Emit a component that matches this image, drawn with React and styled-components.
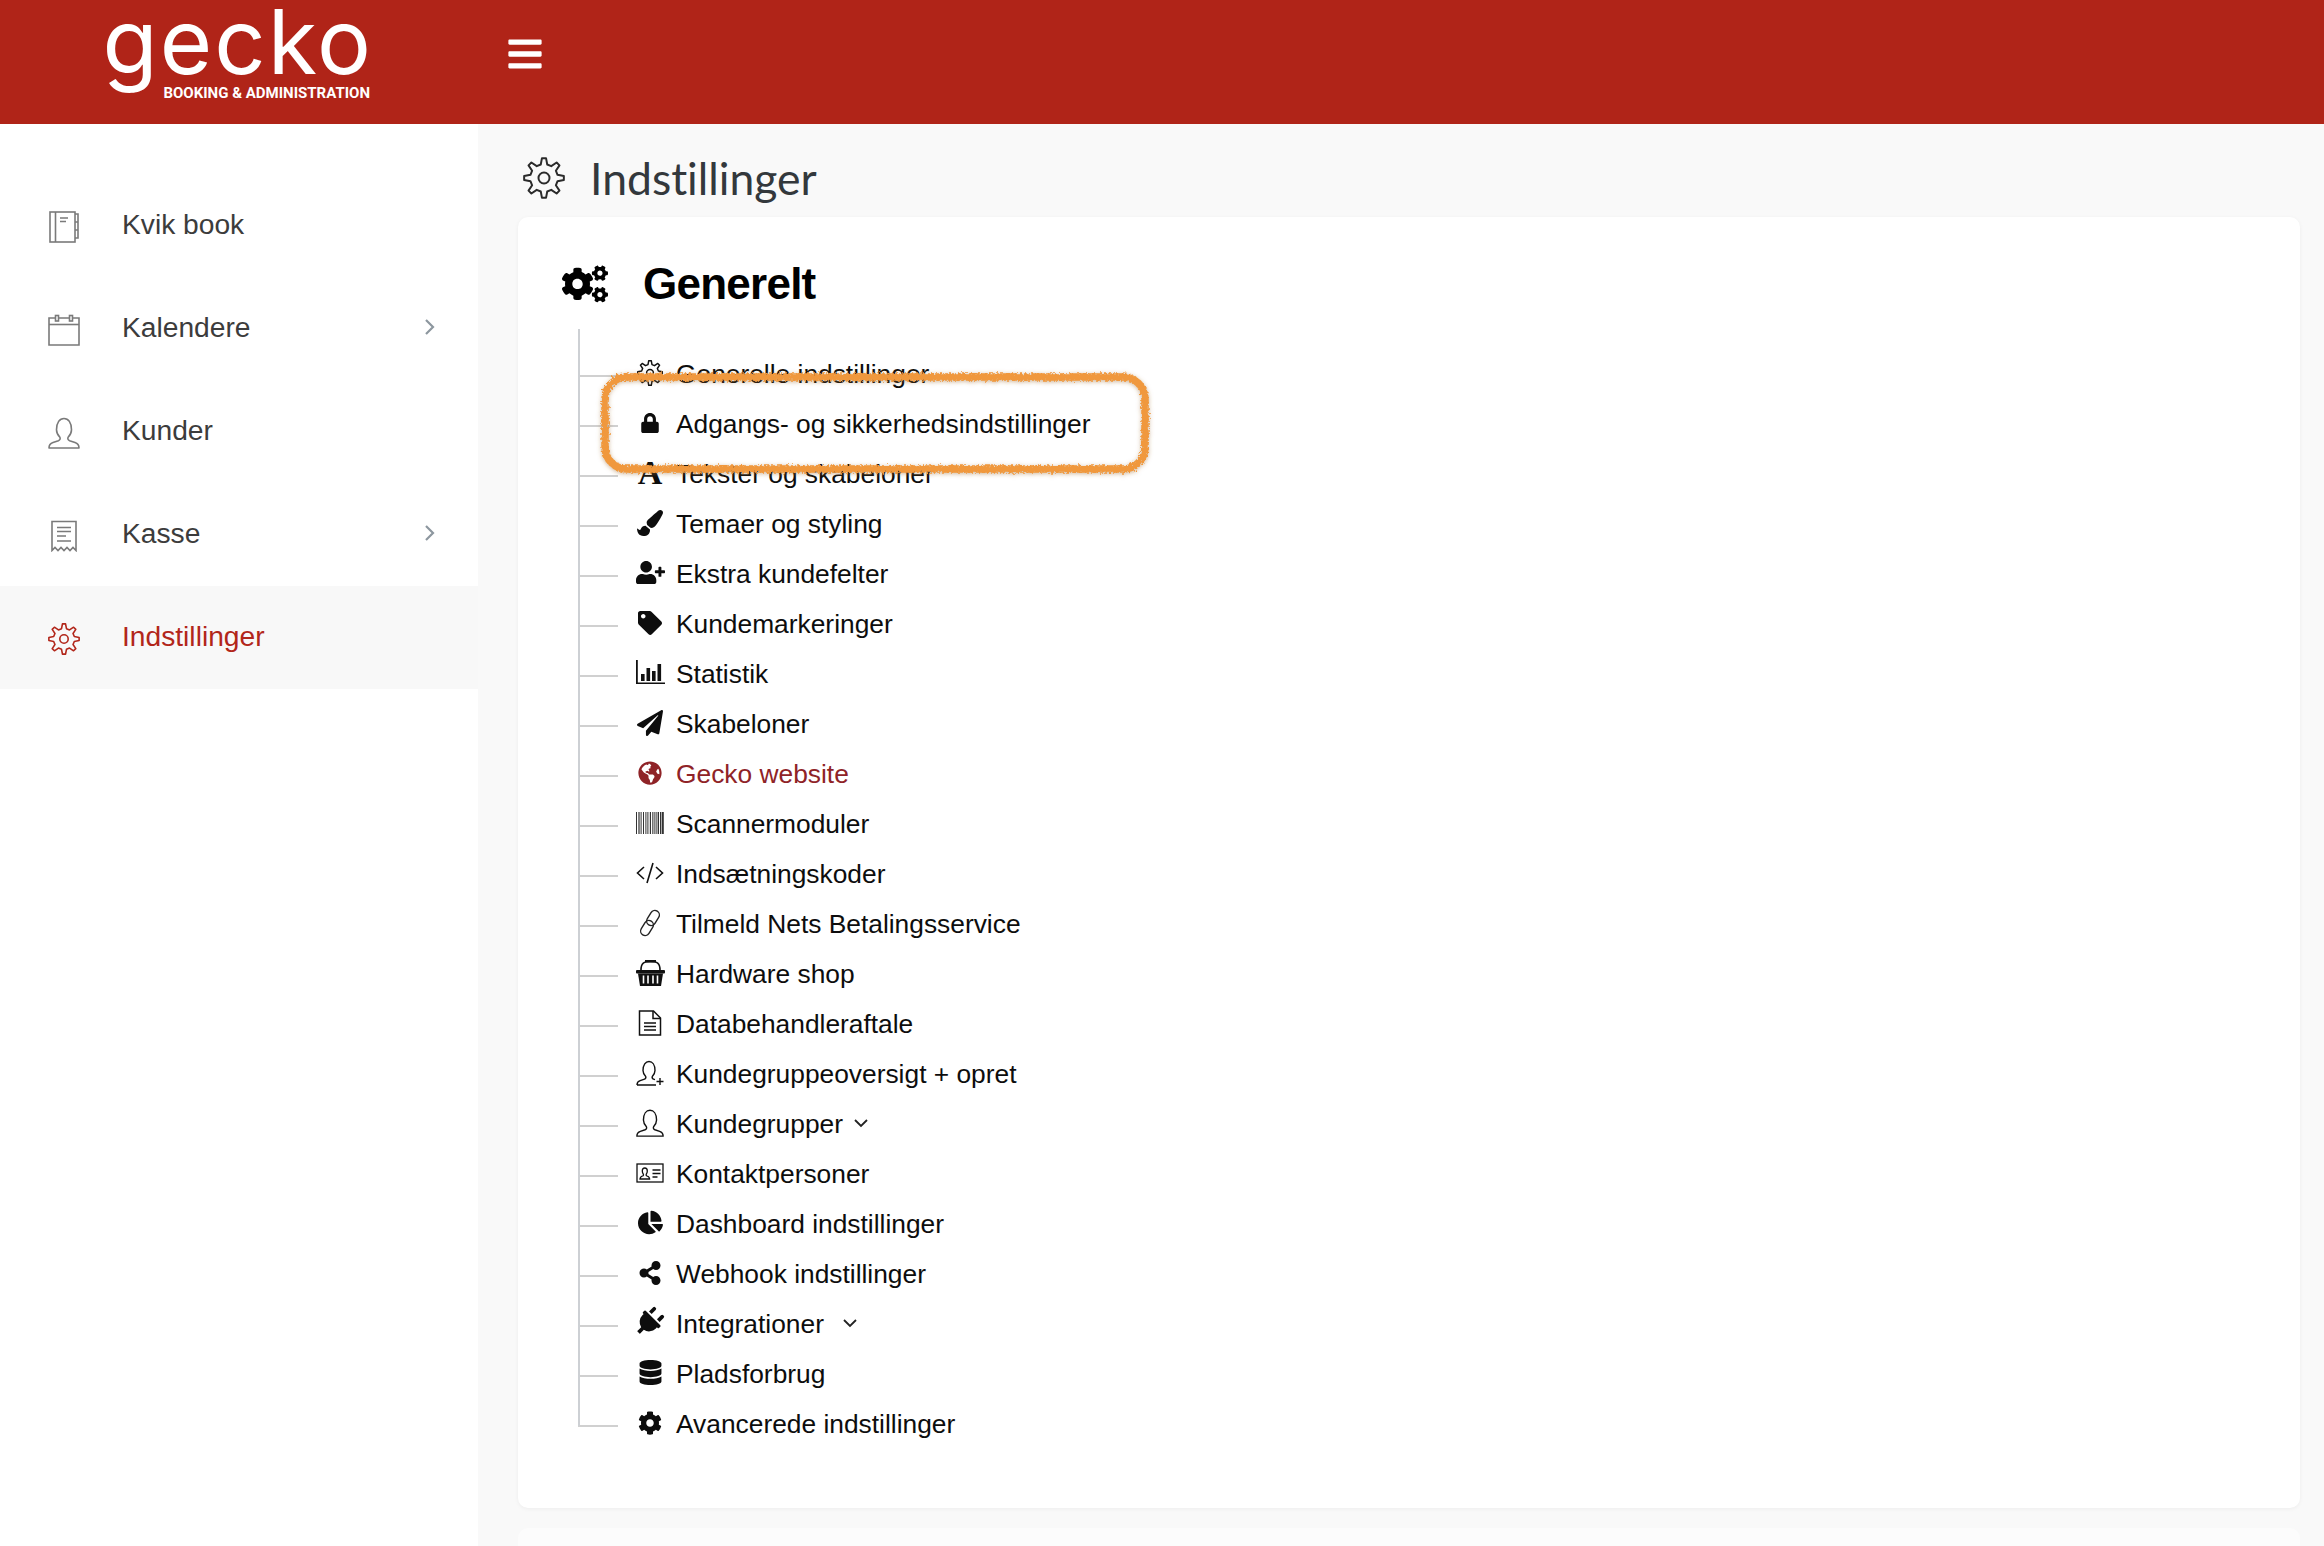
import React from 'react'
import styled, { createGlobalStyle } from 'styled-components'
import {
  FaBars,
  FaChartPie,
  FaCog,
  FaCogs,
  FaDatabase,
  FaGlobeAmericas,
  FaLock,
  FaPaintBrush,
  FaPaperPlane,
  FaPlug,
  FaShareAlt,
  FaTag,
  FaUserPlus,
} from 'react-icons/fa'

const RotatedPlug = styled.span`
  display: inline-block;
  margin: 0 2px 2px 0;
  transform: rotate(45deg);
`

const FontGlyph = styled.span`
  font-family: 'Liberation Serif', serif;
  font-weight: 700;
  font-size: 34px;
  line-height: 1;
`

const gearPath = (cx, cy, teeth, outer, inner) => {
  const step = (Math.PI * 2) / teeth
  const points = []
  for (let i = 0; i < teeth; i++) {
    const a = i * step - Math.PI / 2
    const at = (r, offset) => [
      (cx + Math.cos(a + offset * step) * r).toFixed(2),
      (cy + Math.sin(a + offset * step) * r).toFixed(2),
    ]
    points.push(at(inner, -0.3), at(outer, -0.13), at(outer, 0.13), at(inner, 0.3))
  }
  return 'M' + points.map(p => p.join(' ')).join('L') + 'Z'
}

const LineGear = ({ size = 32, color = '#333', width = 1.6 }) => (
  <svg width={size} height={size} viewBox="0 0 32 32" fill="none" stroke={color} strokeWidth={width} strokeLinejoin="round">
    <path d={gearPath(16, 16, 8, 15.2, 10.6)} />
    <circle cx="16" cy="16" r="4.2" />
  </svg>
)

const NotebookIcon = () => (
  <svg width="32" height="34" viewBox="0 0 32 34" fill="none" stroke="#7a7a7a" strokeWidth="1.6">
    <rect x="2" y="2" width="25" height="30" />
    <path d="M7.5 2v30M12 8h8M12 11.5h6" />
    <path d="M27 4h3v8h-3M27 12h3v8h-3M27 20h3v8h-3" />
  </svg>
)

const CalendarIcon = () => (
  <svg width="32" height="32" viewBox="0 0 32 32" fill="none" stroke="#7a7a7a" strokeWidth="1.6">
    <path d="M1 4h30v27H1z" />
    <path d="M1 10.5h30" />
    <rect x="7.5" y="1.5" width="3" height="5.5" fill="#fff" />
    <rect x="21.5" y="1.5" width="3" height="5.5" fill="#fff" />
  </svg>
)

const PersonIcon = ({ size = 32, color = '#7a7a7a', width = 1.6 }) => (
  <svg width={size} height={size} viewBox="0 0 32 32" fill="none" stroke={color} strokeWidth={width} strokeLinejoin="round">
    <path d="M1 31c0-3 1-4.400 4-5.400l5.400-1.900c1.700-.7 2.100-2 1.500-3.400-1.900-2-3.400-4.300-3.400-7.600C8.500 5.500 11.700 1.500 16 1.500s7.500 4 7.500 11.200c0 3.300-1.500 5.600-3.400 7.600-.6 1.400-.2 2.700 1.500 3.400l5.400 1.900c3 1 4 2.400 4 5.400z" />
  </svg>
)

const ReceiptIcon = () => (
  <svg width="32" height="32" viewBox="0 0 32 32" fill="none" stroke="#7a7a7a" strokeWidth="1.6">
    <path d="M4 1.500h24v29l-3-3-3 3-3-3-3 3-3-3-3 3-3-3-3 3z" />
    <path d="M9 7.500h14M9 11.500h14M9 16h9M9 21h14" />
  </svg>
)

const BarsChartIcon = () => (
  <svg width="29" height="25" viewBox="0 0 29 25" fill="#111">
    <path d="M0 0h1.800v22.400H29V24H0z" />
    <rect x="5" y="14" width="3.600" height="7" />
    <rect x="10.500" y="8" width="3.600" height="13" />
    <rect x="16" y="11" width="3.600" height="10" />
    <rect x="21.500" y="4" width="3.600" height="17" />
  </svg>
)

const BarcodeIcon = () => (
  <svg width="28" height="22" viewBox="0 0 28 22" fill="#333">
    {[
      [0, 1],
      [2, 0.6],
      [3.4, 1],
      [5.4, 0.6],
      [7, 1],
      [9, 0.6],
      [10.6, 1],
      [12.6, 0.6],
      [14, 1],
      [16, 0.7],
      [17.6, 1],
      [19.6, 1],
      [21.6, 1.4],
      [24, 1],
      [25.6, 2.2],
    ].map(([x, w]) => (
      <rect key={x} x={x} y="0" width={w} height="22" />
    ))}
  </svg>
)

const CodeIcon = () => (
  <svg width="28" height="24" viewBox="0 0 28 24" fill="none" stroke="#111" strokeWidth="1.6">
    <path d="M8 6l-6.500 6L8 18M20 6l6.500 6L20 18M17 2l-6 20" />
  </svg>
)

const LinkIcon = () => (
  <svg width="24" height="28" viewBox="0 0 24 28" fill="none" stroke="#222" strokeWidth="1.4">
    <rect x="10.500" y="1" width="9" height="16" rx="4.500" transform="rotate(32 15 9)" />
    <rect x="4.500" y="11" width="9" height="16" rx="4.500" transform="rotate(32 9 19)" />
  </svg>
)

const BasketIcon = () => (
  <svg width="29" height="26" viewBox="0 0 29 26" fill="#111">
    <path d="M5 10C5 3 8 1.500 14.500 1.500S24 3 24 10" fill="none" stroke="#111" strokeWidth="1.6" />
    <rect x="9" y="0" width="11" height="2.500" />
    <rect x="0" y="10" width="29" height="3.500" rx="1" />
    <path d="M2 13.500h25L25 26H4z" />
    <path d="M7.500 15.500v8M12 15.500v8M17 15.500v8M21.500 15.500v8" stroke="#fff" strokeWidth="1.6" />
  </svg>
)

const DocIcon = () => (
  <svg width="24" height="26" viewBox="0 0 24 26" fill="none" stroke="#111" strokeWidth="1.5">
    <path d="M1.500 1h14L22.500 8v17h-21z" />
    <path d="M15 1v7.500h7.500M6 13h12M6 16.500h12M6 20h12" />
  </svg>
)

const PersonPlusIcon = () => (
  <svg width="28" height="26" viewBox="0 0 28 26" fill="none" stroke="#111" strokeWidth="1.4" strokeLinejoin="round">
    <path d="M1 25c0-2.500.8-3.500 3.200-4.300l4.300-1.500c1.300-.6 1.600-1.600 1.200-2.700-1.500-1.600-2.700-3.400-2.700-6C7 4.800 9.600 1.500 13 1.500s6 3.300 6 9c0 2.600-1.200 4.400-2.700 6-.4 1.100-.1 2.100 1.200 2.700l1.500.5M1 25h19" />
    <path d="M24 18v7M20.500 21.500h7" />
  </svg>
)

const ContactIcon = () => (
  <svg width="28" height="20" viewBox="0 0 28 20" fill="none" stroke="#111" strokeWidth="1.3">
    <rect x="1" y="1" width="26" height="18" />
    <path d="M4 16c0-2 1-2.500 2.500-3 1-.4 1.200-1 .8-1.800-.6-1-1-2-1-3.200 0-2 1-3 2.500-3s2.500 1 2.500 3c0 1.200-.4 2.200-1 3.200-.4.8-.2 1.400.8 1.800 1.500.5 2.500 1 2.500 3z" />
    <path d="M16.500 7h8M16.500 10.500h8M16.500 14h5" />
  </svg>
)

const SmallChevronDown = () => (
  <svg width="16" height="10" viewBox="0 0 16 10" fill="none" stroke="#222" strokeWidth="1.8">
    <path d="M2 2l6 6 6-6" />
  </svg>
)

const ChevronRight = () => (
  <svg width="12" height="18" viewBox="0 0 12 18" fill="none" stroke="#8d979f" strokeWidth="2.200">
    <path d="M2 2l7 7-7 7" />
  </svg>
)

const navItems = [
  { label: 'Kvik book', icon: <NotebookIcon /> },
  { label: 'Kalendere', icon: <CalendarIcon />, more: true },
  { label: 'Kunder', icon: <PersonIcon /> },
  { label: 'Kasse', icon: <ReceiptIcon />, more: true },
  { label: 'Indstillinger', icon: <LineGear color="#b2261a" />, active: true },
]

const settings = [
  { label: 'Generelle indstillinger', icon: <LineGear size={26} color="#111" width={1.8} /> },
  { label: 'Adgangs- og sikkerhedsindstillinger', icon: <FaLock size={20} /> },
  { label: 'Tekster og skabeloner', icon: <FontGlyph>A</FontGlyph> },
  { label: 'Temaer og styling', icon: <FaPaintBrush size={26} /> },
  { label: 'Ekstra kundefelter', icon: <FaUserPlus size={29} /> },
  { label: 'Kundemarkeringer', icon: <FaTag size={24} /> },
  { label: 'Statistik', icon: <BarsChartIcon /> },
  { label: 'Skabeloner', icon: <FaPaperPlane size={26} /> },
  { label: 'Gecko website', icon: <FaGlobeAmericas size={24} />, red: true },
  { label: 'Scannermoduler', icon: <BarcodeIcon /> },
  { label: 'Indsætningskoder', icon: <CodeIcon /> },
  { label: 'Tilmeld Nets Betalingsservice', icon: <LinkIcon /> },
  { label: 'Hardware shop', icon: <BasketIcon /> },
  { label: 'Databehandleraftale', icon: <DocIcon /> },
  { label: 'Kundegruppeoversigt + opret', icon: <PersonPlusIcon /> },
  { label: 'Kundegrupper', icon: <PersonIcon size={28} color="#111" width={1.6} />, caret: 10 },
  { label: 'Kontaktpersoner', icon: <ContactIcon /> },
  { label: 'Dashboard indstillinger', icon: <FaChartPie size={25} /> },
  { label: 'Webhook indstillinger', icon: <FaShareAlt size={24} /> },
  { label: 'Integrationer', icon: <RotatedPlug><FaPlug size={30} /></RotatedPlug>, caret: 18 },
  { label: 'Pladsforbrug', icon: <FaDatabase size={25} /> },
  { label: 'Avancerede indstillinger', icon: <FaCog size={24} /> },
]

export default function App() {
  return (
    <>
      <GlobalStyle />
      <Page>
        <Header>
          <Logo>
            <LogoWord>gecko</LogoWord>
            <LogoTag>BOOKING &amp; ADMINISTRATION</LogoTag>
          </Logo>
          <MenuButton>
            <FaBars size={38} />
          </MenuButton>
        </Header>
        <Body>
          <Sidebar>
            {navItems.map(item => (
              <NavRow key={item.label} $active={item.active}>
                <NavIcon>{item.icon}</NavIcon>
                <NavLabel>{item.label}</NavLabel>
                {item.more && (
                  <NavMore>
                    <ChevronRight />
                  </NavMore>
                )}
              </NavRow>
            ))}
          </Sidebar>
          <Main>
            <PageTitle>
              <LineGear size={42} color="#2b2b2b" width={1.5} />
              <PageTitleText>Indstillinger</PageTitleText>
            </PageTitle>
            <Card>
              <CardHeading>
                <FaCogs size={46} />
                <CardTitle>Generelt</CardTitle>
              </CardHeading>
              <Tree>
                {settings.map(row => (
                  <TreeRow key={row.label} $red={row.red}>
                    <Tick />
                    <RowIcon>{row.icon}</RowIcon>
                    <RowLabel>{row.label}</RowLabel>
                    {row.caret && (
                      <Caret $gap={row.caret}>
                        <SmallChevronDown />
                      </Caret>
                    )}
                  </TreeRow>
                ))}
              </Tree>
              <Marker viewBox="0 0 560 112" width="560" height="112" fill="none">
                <defs>
                  <filter id="rough" x="-5%" y="-15%" width="110%" height="130%">
                    <feTurbulence type="fractalNoise" baseFrequency="0.45" numOctaves="3" seed="4" />
                    <feDisplacementMap in="SourceGraphic" scale="6" />
                    <feDropShadow dx="0" dy="1" stdDeviation="2" floodColor="#a06a30" floodOpacity="0.5" />
                  </filter>
                </defs>
                <rect x="9" y="8" width="540" height="92" rx="22" stroke="#f0983c" strokeWidth="7.500" filter="url(#rough)" />
              </Marker>
            </Card>
            <NextCard />
          </Main>
        </Body>
      </Page>
    </>
  )
}

const GlobalStyle = createGlobalStyle`
  html, body {
    margin: 0;
    padding: 0;
  }
  body {
    font-family: 'Liberation Sans', Arial, sans-serif;
    background: #f9f9f9;
  }
`

const Page = styled.div`
  display: flex;
  flex-direction: column;
  height: 1546px;
  overflow: hidden;
`

const Header = styled.header`
  flex: 0 0 124px;
  display: flex;
  align-items: flex-start;
  background: #b02418;
  color: #fff;
`

const Logo = styled.div`
  display: flex;
  flex-direction: column;
  align-items: flex-end;
  width: 266px;
  margin-left: 104px;
`

const LogoWord = styled.div`
  font-family: Inter, sans-serif;
  font-weight: 400;
  font-size: 90px;
  line-height: 80px;
  letter-spacing: 2px;
  margin: 2px -3px 0 0;
  white-space: nowrap;
`

const LogoTag = styled.div`
  font-family: Roboto, sans-serif;
  font-weight: 700;
  font-size: 15px;
  line-height: 16px;
  margin-top: 3px;
  white-space: nowrap;
`

const MenuButton = styled.div`
  margin: 35px 0 0 136px;
  line-height: 0;
`

const Body = styled.div`
  flex: 1;
  display: flex;
  min-height: 0;
`

const Sidebar = styled.nav`
  flex: 0 0 478px;
  padding-top: 50px;
  background: #fff;
  box-sizing: border-box;
`

const NavRow = styled.div`
  display: flex;
  align-items: center;
  height: 103px;
  padding: 0 24px 0 48px;
  font-size: 28.200px;
  color: ${p => (p.$active ? '#b2261a' : '#3c3c3c')};
  background: ${p => (p.$active ? '#f8f8f8' : 'transparent')};
`

const NavIcon = styled.span`
  flex: 0 0 74px;
  display: flex;
  margin-top: 2px;
  line-height: 0;
`

const NavLabel = styled.span`
  flex: 1;
  margin-top: -3px;
`

const NavMore = styled.span`
  margin: -4px 18px 0 0;
  line-height: 0;
`

const Main = styled.main`
  flex: 1;
  padding: 0 24px 0 40px;
  min-width: 0;
`

const PageTitle = styled.div`
  display: flex;
  align-items: center;
  height: 93px;
  padding: 14px 0 0 5px;
  box-sizing: border-box;
`

const PageTitleText = styled.h1`
  margin: 0 0 0 25px;
  font-family: Lato, sans-serif;
  font-weight: 400;
  font-size: 44.500px;
  font-variant-ligatures: none;
  color: #33383c;
`

const Card = styled.section`
  position: relative;
  height: 1291px;
  padding: 37px 0 0 44px;
  box-sizing: border-box;
  background: #fff;
  border-radius: 10px;
  box-shadow: 0 1px 4px rgba(0, 0, 0, 0.05);
`

const NextCard = styled.div`
  height: 60px;
  margin-top: 20px;
  background: #fcfcfc;
  border-radius: 10px;
`

const CardHeading = styled.div`
  display: flex;
  align-items: center;
  height: 60px;
  color: #000;
`

const CardTitle = styled.h2`
  margin: 0 0 0 35px;
  font-size: 44px;
  font-weight: 700;
  letter-spacing: -0.75px;
`

const Tree = styled.div`
  position: relative;
  margin: 15px 0 0 16px;
  padding-top: 18.500px;

  &::before {
    content: '';
    position: absolute;
    left: 0;
    top: 0;
    bottom: 22px;
    width: 2px;
    background: #cdd0d4;
  }
`

const TreeRow = styled.div`
  display: flex;
  align-items: center;
  height: 50px;
  font-size: 26.350px;
  color: ${p => (p.$red ? '#8f2327' : '#0d0d0d')};
`

const RowLabel = styled.span`
  padding-top: 3px;
`

const Tick = styled.i`
  flex: 0 0 40px;
  height: 2px;
  margin: 6px 6px 0 0;
  background: #d0d0d0;
`

const RowIcon = styled.span`
  flex: 0 0 52px;
  display: flex;
  justify-content: center;
  align-items: center;
  line-height: 0;
`

const Caret = styled.span`
  margin-left: ${p => p.$gap}px;
  line-height: 0;
`

const Marker = styled.svg`
  position: absolute;
  left: 78px;
  top: 152px;
  overflow: visible;
  pointer-events: none;
`
